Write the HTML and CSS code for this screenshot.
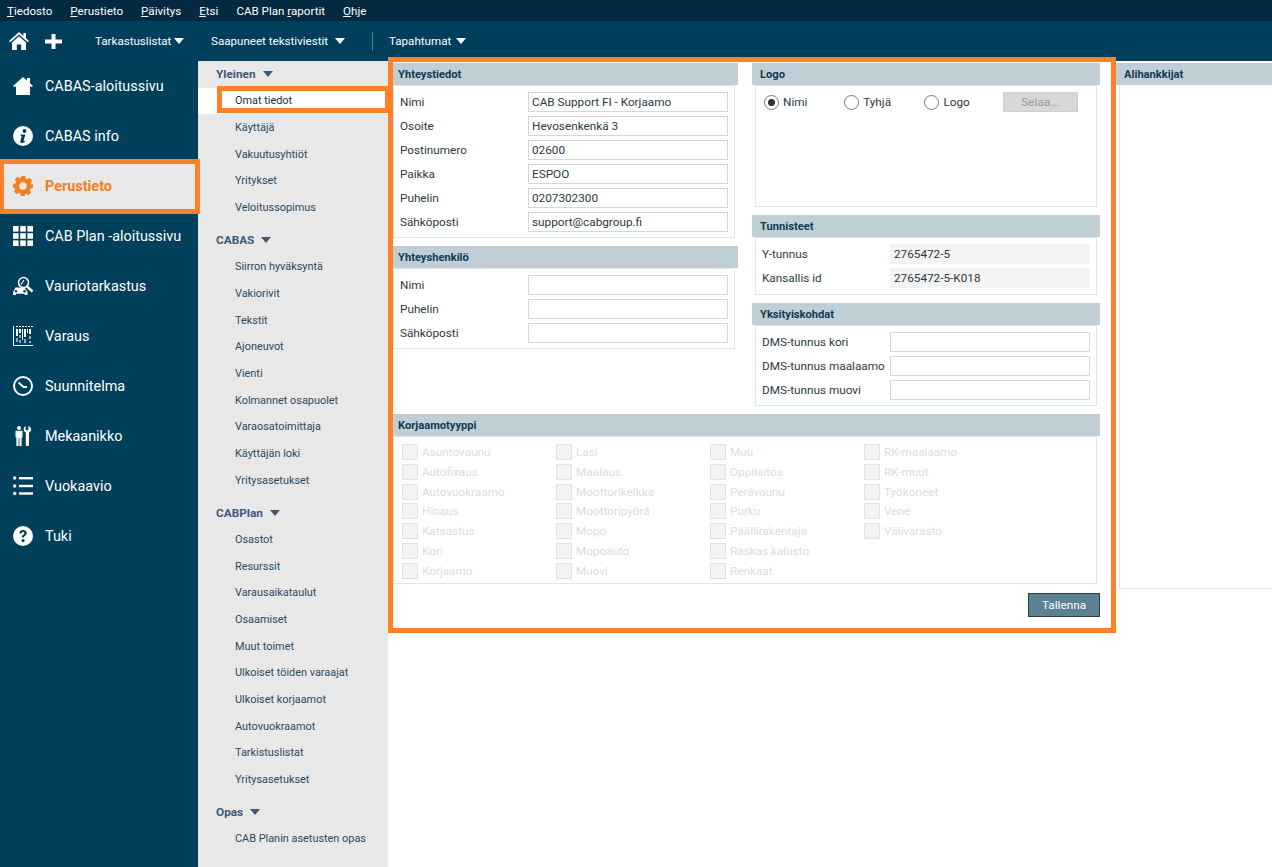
FILE: index.html
```html
<!DOCTYPE html>
<html lang="fi">
<head>
<meta charset="utf-8">
<title>CABAS</title>
<link rel="stylesheet" href="styles.css">
</head>
<body>
<div class="app">
  <nav class="menubar">
    <span><u>T</u>iedosto</span>
    <span><u>P</u>erustieto</span>
    <span><u>P</u>äivitys</span>
    <span><u>E</u>tsi</span>
    <span>CAB Plan <u>r</u>aportit</span>
    <span><u>O</u>hje</span>
  </nav>
  <header class="toolbar">
    <svg class="tool-home" viewBox="0 0 20 18"><path d="M10 0 0 9l1.200 1.300L10 2.500l8.800 7.800L20 9l-3-2.700V1h-2.600v3L10 0Z" fill="#fff"/><path d="M3 10.500 10 4.300l7 6.200V18h-4.800v-5.500H7.800V18H3Z" fill="#fff"/></svg>
    <svg class="tool-plus" viewBox="0 0 17 15"><path d="M6.500 0h4v5.500H17v4h-6.500V15h-4V9.500H0v-4h6.500Z" fill="#fff"/></svg>
    <span class="tool-item first">Tarkastuslistat<i class="caret"></i></span>
    <span class="tool-item second">Saapuneet tekstiviestit<i class="caret"></i></span>
    <i class="tool-sep"></i>
    <span class="tool-item">Tapahtumat<i class="caret"></i></span>
  </header>
  <div class="body">
    <aside class="sidebar">
      <a class="side-item"><svg viewBox="0 0 20 20"><path d="M10 1 0 10l.8.800H3V19h14v-8.200h2.200L20 10l-3-2.700V2h-3v2.600Z" fill="#fff"/></svg>CABAS-aloitussivu</a>
      <a class="side-item"><svg viewBox="0 0 20 20"><circle cx="10" cy="10" r="10" fill="#fff"/><circle cx="11.500" cy="5" r="1.900" fill="#00405b"/><path d="M7.600 8.500h4.700l-1.700 6.300c-.1.500.3.600 1.600-.3l.3.600c-1.500 1.500-2.800 2-4 2-1.100 0-1.400-.7-1.100-1.800l1.200-4.700c.1-.6-.2-.8-1.100-.9Z" fill="#00405b"/></svg>CABAS info</a>
      <a class="side-item active"><svg viewBox="0 0 20 20"><path fill="#f47f20" fill-rule="evenodd" d="M8 0h4l.5 2.600 1.700.7 2.200-1.500 2.800 2.800-1.500 2.200.7 1.700L20 8v4l-2.600.5-.7 1.700 1.500 2.200-2.800 2.800-2.200-1.500-1.700.7L12 20H8l-.5-2.600-1.700-.7-2.200 1.500-2.800-2.800 1.500-2.200-.7-1.700L0 12V8l2.600-.5.700-1.700-1.500-2.200 2.800-2.800 2.200 1.500 1.700-.7ZM10 6.300a3.700 3.700 0 1 0 0 7.400 3.700 3.700 0 0 0 0-7.400Z"/></svg>Perustieto</a>
      <a class="side-item"><svg viewBox="0 0 20 20" fill="#fff"><rect width="5.600" height="5.600"/><rect x="7.200" width="5.600" height="5.600"/><rect x="14.400" width="5.600" height="5.600"/><rect y="7.200" width="5.600" height="5.600"/><rect x="7.200" y="7.200" width="5.600" height="5.600"/><rect x="14.400" y="7.200" width="5.600" height="5.600"/><rect y="14.400" width="5.600" height="5.600"/><rect x="7.200" y="14.400" width="5.600" height="5.600"/><rect x="14.400" y="14.400" width="5.600" height="5.600"/></svg>CAB Plan -aloitussivu</a>
      <a class="side-item"><svg viewBox="0 0 20 20"><path d="M2.300 11.500h9.400l1.600 2.900 1.200 1V19h-2.800v-1.300H2.900V19H.1v-3.600l1-1Z" fill="#fff"/><circle cx="3" cy="15.300" r="1.200" fill="#00405b"/><circle cx="11.500" cy="15.300" r="1.200" fill="#00405b"/><circle cx="10.500" cy="6.500" r="5" fill="#00405b" stroke="#fff" stroke-width="1.600"/><path d="m14 10.500 5.500 5" stroke="#fff" stroke-width="2.400"/><path d="M8 8.500 11 4" stroke="#fff" stroke-width="1.200"/></svg>Vauriotarkastus</a>
      <a class="side-item"><svg viewBox="0 0 20 20" fill="#fff"><path d="M0 0h1v19h19v1H0Z"/><path d="M3 0h2v1H3Zm3 0h2v1H6Zm3 0h2v1H9Zm3 0h2v1h-2Zm3 0h2v1h-2Zm3 0h2v1h-2Z"/><path d="M3 3h2v7H3Zm3 0h2v4H6Zm5 0h2v8h-2Zm5 0h2v5h-2Zm-7 0h1v11H9Zm5 0h1v4h-1Z"/><path d="M6 9h2v3H6Zm10 1h2v3h-2ZM3 12h2v4H3Zm8 1h2v4h-2Zm5 2h2v2h-2ZM6 14h2v3H6Z" opacity=".55"/></svg>Varaus</a>
      <a class="side-item"><svg viewBox="0 0 20 20"><circle cx="10" cy="10" r="9" fill="none" stroke="#fff" stroke-width="2"/><path d="m5.500 6.500 5 4.500H14" fill="none" stroke="#fff" stroke-width="1.800"/></svg>Suunnitelma</a>
      <a class="side-item"><svg viewBox="0 0 20 20" fill="#fff"><circle cx="6" cy="2" r="2"/><path d="M2.500 4.800h7v6.700H8.600V20H6.400v-8H5.600v8H3.400v-8.500h-.9Z"/><path d="M12.600 0v3.600l1.400 1.200 1.400-1.200V0c1.900.7 2.700 2 2.700 3.500 0 1.400-.8 2.600-2.100 3.100v11.900a1.600 1.600 0 0 1-3.200 0V6.600a3.400 3.400 0 0 1-2.100-3.100c0-1.500.5-2.800 1.900-3.500Z"/></svg>Mekaanikko</a>
      <a class="side-item"><svg viewBox="0 0 20 20" fill="#fff"><circle cx="1.700" cy="2" r="1.700"/><circle cx="1.700" cy="10" r="1.700"/><circle cx="1.700" cy="17.500" r="1.700"/><rect x="6" y="1" width="14" height="2.400"/><rect x="6" y="8.800" width="14" height="2.400"/><rect x="6" y="16.300" width="14" height="2.400"/></svg>Vuokaavio</a>
      <a class="side-item"><svg viewBox="0 0 20 20"><circle cx="10" cy="10" r="10" fill="#fff"/><path d="M6.300 7.300C6.500 5 8 4 10.100 4c2.200 0 3.700 1.200 3.700 3 0 1.300-.7 2-1.700 2.700-.9.600-1.100 1-1.100 1.800H8.900c-.1-1.300.3-2 1.300-2.700.8-.6 1.200-1 1.200-1.600 0-.7-.5-1.200-1.300-1.200s-1.400.5-1.500 1.500Z" fill="#00405b"/><circle cx="10" cy="14.600" r="1.600" fill="#00405b"/></svg>Tuki</a>
    </aside>
    <nav class="submenu">
      <h3 class="sub-head">Yleinen<i class="caret blue"></i></h3>
      <a class="sub-item current">Omat tiedot</a>
      <a class="sub-item">Käyttäjä</a>
      <a class="sub-item">Vakuutusyhtiöt</a>
      <a class="sub-item">Yritykset</a>
      <a class="sub-item">Veloitussopimus</a>
      <h3 class="sub-head">CABAS<i class="caret blue"></i></h3>
      <a class="sub-item">Siirron hyväksyntä</a>
      <a class="sub-item">Vakiorivit</a>
      <a class="sub-item">Tekstit</a>
      <a class="sub-item">Ajoneuvot</a>
      <a class="sub-item">Vienti</a>
      <a class="sub-item">Kolmannet osapuolet</a>
      <a class="sub-item">Varaosatoimittaja</a>
      <a class="sub-item">Käyttäjän loki</a>
      <a class="sub-item">Yritysasetukset</a>
      <h3 class="sub-head">CABPlan<i class="caret blue"></i></h3>
      <a class="sub-item">Osastot</a>
      <a class="sub-item">Resurssit</a>
      <a class="sub-item">Varausaikataulut</a>
      <a class="sub-item">Osaamiset</a>
      <a class="sub-item">Muut toimet</a>
      <a class="sub-item">Ulkoiset töiden varaajat</a>
      <a class="sub-item">Ulkoiset korjaamot</a>
      <a class="sub-item">Autovuokraamot</a>
      <a class="sub-item">Tarkistuslistat</a>
      <a class="sub-item">Yritysasetukset</a>
      <h3 class="sub-head">Opas<i class="caret blue"></i></h3>
      <a class="sub-item">CAB Planin asetusten opas</a>
    </nav>
    <main class="main">
      <form class="form">
        <div class="columns">
          <div class="col col-left">
            <section class="panel">
              <h2 class="panel-head">Yhteystiedot</h2>
              <div class="panel-body fields">
                <label class="field"><span>Nimi</span><input value="CAB Support FI - Korjaamo"></label>
                <label class="field"><span>Osoite</span><input value="Hevosenkenkä 3"></label>
                <label class="field"><span>Postinumero</span><input value="02600"></label>
                <label class="field"><span>Paikka</span><input value="ESPOO"></label>
                <label class="field"><span>Puhelin</span><input value="0207302300"></label>
                <label class="field"><span>Sähköposti</span><input value="support@cabgroup.fi"></label>
              </div>
            </section>
            <section class="panel">
              <h2 class="panel-head">Yhteyshenkilö</h2>
              <div class="panel-body fields">
                <label class="field"><span>Nimi</span><input></label>
                <label class="field"><span>Puhelin</span><input></label>
                <label class="field"><span>Sähköposti</span><input></label>
              </div>
            </section>
          </div>
          <div class="col col-right">
            <section class="panel">
              <h2 class="panel-head">Logo</h2>
              <div class="panel-body logo-body">
                <span class="radio on">Nimi</span>
                <span class="radio">Tyhjä</span>
                <span class="radio">Logo</span>
                <span class="browse">Selaa...</span>
              </div>
            </section>
            <section class="panel">
              <h2 class="panel-head">Tunnisteet</h2>
              <div class="panel-body fields ids">
                <div class="field"><span>Y-tunnus</span><output>2765472-5</output></div>
                <div class="field"><span>Kansallis id</span><output>2765472-5-K018</output></div>
              </div>
            </section>
            <section class="panel">
              <h2 class="panel-head">Yksityiskohdat</h2>
              <div class="panel-body fields">
                <label class="field"><span>DMS-tunnus kori</span><input></label>
                <label class="field"><span>DMS-tunnus maalaamo</span><input></label>
                <label class="field"><span>DMS-tunnus muovi</span><input></label>
              </div>
            </section>
          </div>
        </div>
        <section class="panel wide">
          <h2 class="panel-head">Korjaamotyyppi</h2>
          <div class="panel-body checks">
            <span class="check">Asuntovaunu</span><span class="check">Autofixaus</span><span class="check">Autovuokraamo</span><span class="check">Hinaus</span><span class="check">Katsastus</span><span class="check">Kori</span><span class="check">Korjaamo</span>
            <span class="check">Lasi</span><span class="check">Maalaus</span><span class="check">Moottorikelkka</span><span class="check">Moottoripyörä</span><span class="check">Mopo</span><span class="check">Mopoauto</span><span class="check">Muovi</span>
            <span class="check">Muu</span><span class="check">Oppilaitos</span><span class="check">Perävaunu</span><span class="check">Purku</span><span class="check">Päällirakentaja</span><span class="check">Raskas kalusto</span><span class="check">Renkaat</span>
            <span class="check">RK-maalaamo</span><span class="check">RK-muut</span><span class="check">Työkoneet</span><span class="check">Vene</span><span class="check">Välivarasto</span>
          </div>
        </section>
        <div class="actions"><span class="save">Tallenna</span></div>
      </form>
      <section class="side-panel">
        <h2 class="panel-head">Alihankkijat</h2>
        <div class="side-panel-body"></div>
      </section>
    </main>
    <i class="mark mark-side"></i>
    <i class="mark mark-sub"></i>
    <i class="mark mark-main"></i>
  </div>
</div>
</body>
</html>
```
FILE: styles.css
```css
* { box-sizing: border-box; }
html, body { margin: 0; height: 100%; background: #fff; overflow: hidden; }
body { font-family: Roboto, "Noto Sans", Arial, sans-serif; font-size: 11.750px; color: #2b3a42; }
.app { width: 1272px; height: 867px; display: flex; flex-direction: column; }

.menubar { height: 21px; background: linear-gradient(#02293f, #032b42); color: #fff; display: flex; gap: 18px; padding-left: 7px; align-items: center; font-size: 11.600px; }
.toolbar { height: 40px; background: #003f5c; color: #fff; display: flex; align-items: center; position: relative; font-size: 11.600px; }
.tool-home { width: 20px; height: 18px; margin-left: 9px; }
.tool-plus { width: 17px; height: 15px; margin-left: 16px; }
.tool-item { display: inline-flex; align-items: center; }
.tool-item.first { margin-left: 33px; width: 89px; }
.tool-item.second { margin-left: 27px; width: 134px; }
.tool-sep { width: 1px; height: 19px; background: #5c8090; margin: 0 16px 0 27px; }
.caret { display: inline-block; width: 0; height: 0; border-left: 5px solid transparent; border-right: 5px solid transparent; border-top: 6px solid #fff; margin-left: 5px; }
.tool-item .caret { margin-left: auto; }
.tool-item:last-child .caret { margin-left: 5px; }
.caret.blue { border-top-color: #3b5878; margin-left: 7px; }

.body { flex: 1; display: flex; position: relative; min-height: 0; }
.sidebar { width: 198px; background: #00405b; }
.side-item { height: 50px; display: flex; align-items: center; color: #fff; font-size: 14.400px; padding-left: 13px; }
.side-item svg { width: 20px; height: 20px; margin-right: 12px; flex: none; }
.side-item.active { background: #e8e8e8; color: #f47f20; font-weight: 700; }

.submenu { width: 190px; background: #e8e8e8; }
.sub-head { margin: 6px 0 0; height: 26.670px; padding-left: 18px; font-size: 11.800px; font-weight: 700; color: #3b5878; display: flex; align-items: center; }
.sub-head:first-child { margin-top: 0; }
.sub-item { height: 26.670px; display: flex; align-items: center; padding-left: 37px; color: #2a4a64; font-size: 10.900px; }
.sub-item.current { background: #fff; color: #1d2f3a; }

.main { flex: 1; display: flex; align-items: flex-start; padding: 2px 0 0 5px; min-width: 0; }
.form { width: 707px; flex: none; }
.columns { display: flex; gap: 14px; }
.col { display: flex; flex-direction: column; gap: 8px; }
.col-left { width: 345px; }
.col-right { width: 348px; }
.panel-head { margin: 0; height: 22px; background: #c0ced5; color: #0f3a52; font-size: 11.150px; font-weight: 700; display: flex; align-items: center; padding-left: 8px; }
.col-left .panel-head, .wide .panel-head { padding-left: 5px; }
.panel-body { border: 1px solid #dfe6e8; margin-right: 3px; }
.col-right .panel-body { margin-left: 3px; }
.fields { display: flex; flex-direction: column; gap: 4px; padding: 6px 6px 5px 6px; }
.fields.ids { padding-bottom: 6px; }
.field { display: grid; grid-template-columns: 128px 200px; align-items: center; height: 20px; white-space: nowrap; }
.field input { width: 200px; height: 20px; border: 1px solid #d4d8da; padding: 0 3px; margin: 0; font: inherit; color: #2b3a42; background: #fff; outline: none; border-radius: 0; }
.field output { height: 20px; background: #f3f3f3; padding-left: 4px; display: flex; align-items: center; }

.logo-body { height: 122px; padding: 6px 0 0 8px; display: flex; align-items: flex-start; position: relative; }
.radio { width: 80.200px; height: 20px; display: flex; align-items: center; color: #2b3a42; }
.radio::before { content: ""; width: 13px; height: 13px; border-radius: 50%; border: 1px solid #7a7a7a; background: #fff; margin-right: 4px; flex: none; }
.radio.on::before { background: radial-gradient(circle, #333 0 3.200px, #fff 3.900px); }
.browse { width: 75px; height: 20px; background: #d8d8d8; border: 1px solid #cfcfcf; color: #9a9a9a; display: flex; align-items: center; justify-content: center; margin-left: -1.600px; }

.wide { margin-top: 8px; }
.checks { height: 148px; padding: 8px 0 0 8px; display: grid; grid-auto-flow: column; grid-template-rows: repeat(7, 19.830px); grid-auto-columns: 154px; align-content: start; }
.check { display: flex; align-items: center; color: #dcdcdc; height: 14px; }
.check::before { content: ""; width: 14px; height: 14px; background: #f3f3f3; border: 1px solid #e2e2e2; margin-right: 4px; flex: none; }
.actions { display: flex; justify-content: flex-end; margin-top: 9px; }
.save { width: 72px; height: 24px; background: #5a8293; border: 1px solid #2e3b44; color: #fff; display: flex; align-items: center; justify-content: center; }

.side-panel { margin-left: 16px; flex: 1; min-width: 0; }
.side-panel-body { height: 504px; margin-left: 3px; border-left: 1px solid #dfe6e8; border-bottom: 1px solid #dfe6e8; }

.mark { position: absolute; border: 5px solid #ff8026; pointer-events: none; display: block; }
.mark-side { left: -1px; top: 98px; width: 201px; height: 55px; }
.mark-sub { left: 217px; top: 25px; width: 173px; height: 27px; }
.mark-main { left: 388px; top: -4px; width: 728px; height: 576px; }
```
